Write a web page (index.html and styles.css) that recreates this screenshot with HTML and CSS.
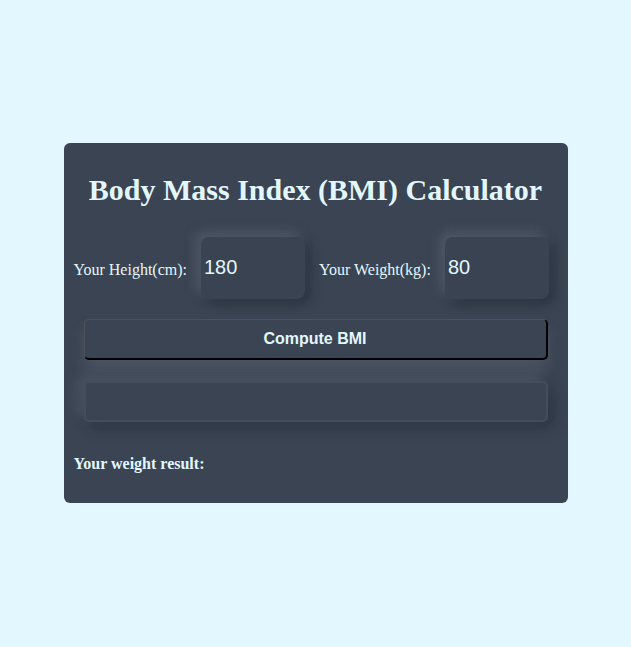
FILE: index.html
```html
<!DOCTYPE html>
<html>
<head>
<meta charset="utf-8">
<link rel="stylesheet" href="styles.css">
</head>
<body>
<div class="page">
  <div class="card">
    <h1 class="title">Body Mass Index (BMI) Calculator</h1>
    <div class="fields">
      <label class="label">Your Height(cm):</label>
      <input class="input" type="text" value="180">
      <label class="label">Your Weight(kg):</label>
      <input class="input" type="text" value="80">
    </div>
    <button class="btn">Compute BMI</button>
    <div class="result-box"></div>
    <p class="result">Your weight result:</p>
  </div>
</div>
</body>
</html>
```
FILE: styles.css
```css
html, body { margin: 0; padding: 0; }
body {
  background: #e2f7ff;
  font-family: "Liberation Serif", "Times New Roman", serif;
  color: #e2f7ff;
}
.page {
  height: 647px;
  box-sizing: border-box;
  padding-top: 143px;
  display: flex;
  align-items: flex-start;
  justify-content: center;
}
.card {
  width: 504px;
  height: 360px;
  box-sizing: border-box;
  background: #3b4453;
  border-radius: 6px;
  padding: 30px 10px 0 10px;
}
.title {
  margin: 0;
  text-align: center;
  font-size: 30px;
  font-weight: bold;
  line-height: 34px;
}
.fields {
  display: flex;
  align-items: center;
  margin-top: 30px;
}
.label {
  font-size: 16px;
  margin-right: 14px;
  padding-top: 4px;
}
.input {
  width: 104px;
  height: 62px;
  box-sizing: border-box;
  border: none;
  border-radius: 8px;
  background: #3a4351;
  color: #e2f7ff;
  font-family: "Liberation Sans", Arial, sans-serif;
  font-size: 20px;
  padding: 0 0 2px 3px;
  outline: none;
  box-shadow: -5px -5px 12px rgba(120,130,145,0.35), 5px 5px 12px rgba(20,25,35,0.4);
}
.fields .input:nth-of-type(1) { margin-right: 14px; }
.btn {
  display: block;
  margin: 20px 0 0 10px;
  width: 464px;
  height: 41px;
  box-sizing: border-box;
  background: #3b4453;
  color: #e2f7ff;
  font-family: "Liberation Sans", Arial, sans-serif;
  font-size: 16px;
  font-weight: bold;
  border: 1px solid #4f5158;
  border-right: 2px solid #000;
  border-bottom: 2px solid #000;
  border-radius: 5px;
  box-shadow: 0 10px 14px rgba(120,130,145,0.25);
  padding: 0;
}
.result-box {
  margin: 21px 0 0 10px;
  width: 464px;
  height: 41px;
  box-sizing: border-box;
  border: 2px solid #454d5a;
  border-radius: 5px;
  background: #3b4453;
  box-shadow: -6px -6px 14px rgba(120,130,145,0.25), 6px 6px 14px rgba(20,25,35,0.35);
}
.result {
  margin: 33px 0 0 0;
  font-size: 16px;
  font-weight: bold;
}
```
